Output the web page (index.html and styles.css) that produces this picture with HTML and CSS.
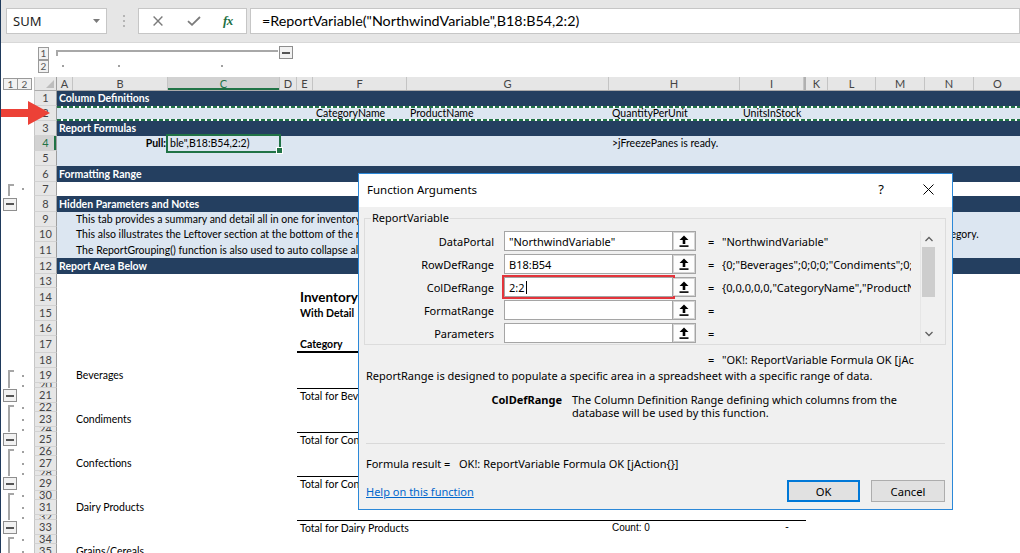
FILE: index.html
```html
<!DOCTYPE html>
<html lang="en">
<head>
<meta charset="utf-8">
<title>Function Arguments</title>
<link rel="stylesheet" href="styles.css">
</head>
<body>
<div class="app">
  <header class="fbar">
    <div class="namebox"><span>SUM</span><svg width="7" height="4" viewBox="0 0 7 4"><path d="M0 0H7L3.5 4Z" fill="#7a7a7a"/></svg></div>
    <div class="grip"><i></i><i></i><i></i></div>
    <div class="fxbox">
      <svg class="ic-x" width="10" height="10" viewBox="0 0 10 10"><path d="M0.6 0.6L9.4 9.4M9.4 0.6L0.6 9.4" stroke="#7b7b7b" stroke-width="1.4" fill="none"/></svg>
      <svg class="ic-ok" width="14" height="10" viewBox="0 0 14 10"><path d="M1 5.2L5 8.8L13 1" stroke="#7b7b7b" stroke-width="1.8" fill="none"/></svg>
      <span class="fx">fx</span>
    </div>
    <div class="formula">=ReportVariable("NorthwindVariable",B18:B54,2:2)</div>
  </header>

  <div class="olstrip">
    <div class="lvls"><b>1</b><b>2</b></div>
    <div class="colgrp">
      <i class="cg-line"></i>
      <i class="mnb cg-minus"></i>
      <i class="dot cg-a"></i><i class="dot cg-b"></i><i class="dot cg-c"></i>
    </div>
  </div>

  <div class="hdr">
    <div class="ol hlv"><b>1</b><b>2</b></div>
    <div class="corner"><i class="tri"></i></div>
    <div class="cols">
      <span>A</span><span>B</span><span class="on">C</span><span>D</span><span>E</span><span>F</span><span>G</span><span>H</span><span>I</span><span class="hid"></span><span>K</span><span>L</span><span>M</span><span>N</span><span>O</span>
    </div>
  </div>

  <div class="r h15"><div class="ol"></div><div class="rh">1</div><div class="cells navy"><span class="ca">Column Definitions</span></div></div>
  <div class="r h15"><div class="ol"></div><div class="rh">2</div><div class="cells lite ants"><span class="cf">CategoryName</span><span class="cg">ProductName</span><span class="chh">QuantityPerUnit</span><span class="ci">UnitsInStock</span></div></div>
  <div class="r h15"><div class="ol"></div><div class="rh">3</div><div class="cells navy"><span class="ca">Report Formulas</span></div></div>
  <div class="r h15"><div class="ol"></div><div class="rh on">4</div><div class="cells lite"><span class="cb pull">Pull:</span><span class="cc sel">ble",B18:B54,2:2)</span><span class="chh">&gt;jFreezePanes is ready.</span></div></div>
  <div class="r h15"><div class="ol"></div><div class="rh">5</div><div class="cells lite"></div></div>
  <div class="r h16"><div class="ol"></div><div class="rh">6</div><div class="cells navy"><span class="ca">Formatting Range</span></div></div>
  <div class="r h14"><div class="ol"><i class="bk t"></i><i class="dot"></i></div><div class="rh">7</div><div class="cells"></div></div>
  <div class="r h16"><div class="ol"><i class="mnb"></i></div><div class="rh">8</div><div class="cells navy"><span class="ca">Hidden Parameters and Notes</span></div></div>
  <div class="r h15"><div class="ol"></div><div class="rh">9</div><div class="cells lite"><span class="cb">This tab provides a summary and detail all in one for inventory.</span></div></div>
  <div class="r h15"><div class="ol"></div><div class="rh">10</div><div class="cells lite"><span class="cb">This also illustrates the Leftover section at the bottom of the report, which picks up any product returned by the database that do not fall into any of the rows defined for a specific product category.</span></div></div>
  <div class="r h16"><div class="ol"></div><div class="rh">11</div><div class="cells lite"><span class="cb">The ReportGrouping() function is also used to auto collapse all.</span></div></div>
  <div class="r h16"><div class="ol"></div><div class="rh">12</div><div class="cells navy"><span class="ca">Report Area Below</span></div></div>
  <div class="r h14"><div class="ol"></div><div class="rh">13</div><div class="cells"></div></div>
  <div class="r h18"><div class="ol"></div><div class="rh">14</div><div class="cells"><span class="ce title">Inventory</span></div></div>
  <div class="r h15"><div class="ol"></div><div class="rh">15</div><div class="cells"><span class="ce bold">With Detail</span></div></div>
  <div class="r h15"><div class="ol"></div><div class="rh">16</div><div class="cells"></div></div>
  <div class="r h17"><div class="ol"></div><div class="rh">17</div><div class="cells"><i class="ej uline"></i><span class="ce cat">Category</span></div></div>
  <div class="r h15"><div class="ol"></div><div class="rh">18</div><div class="cells"></div></div>
  <div class="r h15"><div class="ol"><i class="bk t"></i><i class="dot"></i></div><div class="rh">19</div><div class="cells"><span class="cb">Beverages</span></div></div>
  <div class="r h5"><div class="ol"><i class="bk"></i><i class="dot"></i></div><div class="rh">20</div><div class="cells"></div></div>
  <div class="r h15"><div class="ol"><i class="mnb"></i></div><div class="rh">21</div><div class="cells"><i class="ej tline"></i><span class="ce tot">Total for Bev</span></div></div>
  <div class="r h9"><div class="ol"><i class="bk t"></i><i class="dot"></i></div><div class="rh">22</div><div class="cells"></div></div>
  <div class="r h15"><div class="ol"><i class="bk"></i><i class="dot"></i></div><div class="rh">23</div><div class="cells"><span class="cb">Condiments</span></div></div>
  <div class="r h5"><div class="ol"><i class="bk"></i><i class="dot"></i></div><div class="rh">24</div><div class="cells"></div></div>
  <div class="r h15"><div class="ol"><i class="mnb"></i></div><div class="rh">25</div><div class="cells"><i class="ej tline"></i><span class="ce tot">Total for Con</span></div></div>
  <div class="r h9"><div class="ol"><i class="bk t"></i><i class="dot"></i></div><div class="rh">26</div><div class="cells"></div></div>
  <div class="r h15"><div class="ol"><i class="bk"></i><i class="dot"></i></div><div class="rh">27</div><div class="cells"><span class="cb">Confections</span></div></div>
  <div class="r h5"><div class="ol"><i class="bk"></i><i class="dot"></i></div><div class="rh">28</div><div class="cells"></div></div>
  <div class="r h15"><div class="ol"><i class="mnb"></i></div><div class="rh">29</div><div class="cells"><i class="ej tline"></i><span class="ce tot">Total for Con</span></div></div>
  <div class="r h9"><div class="ol"><i class="bk t"></i><i class="dot"></i></div><div class="rh">30</div><div class="cells"></div></div>
  <div class="r h15"><div class="ol"><i class="bk"></i><i class="dot"></i></div><div class="rh">31</div><div class="cells"><span class="cb">Dairy Products</span></div></div>
  <div class="r h5"><div class="ol"><i class="bk"></i><i class="dot"></i></div><div class="rh">32</div><div class="cells"></div></div>
  <div class="r h15"><div class="ol"><i class="mnb"></i></div><div class="rh">33</div><div class="cells"><i class="ej tline"></i><span class="ce tot">Total for Dairy Products</span><span class="chh cnt">Count: 0</span><span class="ci dash">-</span></div></div>
  <div class="r h9"><div class="ol"><i class="bk t"></i><i class="dot"></i></div><div class="rh">34</div><div class="cells"></div></div>
  <div class="r h15"><div class="ol"><i class="bk"></i><i class="dot"></i></div><div class="rh">35</div><div class="cells"><span class="cb">Grains/Cereals</span></div></div>

  <svg class="arrow" width="52" height="26" viewBox="0 0 52 26"><path d="M0 9H28V1L50 13L28 25V17H0Z" fill="#ec4137"/></svg>

  <section class="dlg">
    <div class="dlg-title">
      <span class="dt">Function Arguments</span>
      <span class="q">?</span>
      <svg class="close" width="11" height="11" viewBox="0 0 11 11"><path d="M0.5 0.5L10.5 10.5M10.5 0.5L0.5 10.5" stroke="#000" stroke-width="1" fill="none"/></svg>
    </div>
    <div class="dlg-body">
      <fieldset class="gb">
        <legend>ReportVariable</legend>
        <div class="gb-in">
          <div class="args">
            <label>DataPortal</label>
            <div class="inp"><span class="fld">"NorthwindVariable"</span><span class="rb"><svg width="10" height="12" viewBox="0 0 10 12"><path d="M5 0.5L9.5 5H6.3V9H3.7V5H0.5Z" fill="#000"/><rect x="0.5" y="10.3" width="9" height="1.6" fill="#000"/></svg></span></div>
            <span class="eq">=</span><span class="val">"NorthwindVariable"</span>

            <label>RowDefRange</label>
            <div class="inp"><span class="fld">B18:B54</span><span class="rb"><svg width="10" height="12" viewBox="0 0 10 12"><path d="M5 0.5L9.5 5H6.3V9H3.7V5H0.5Z" fill="#000"/><rect x="0.5" y="10.3" width="9" height="1.6" fill="#000"/></svg></span></div>
            <span class="eq">=</span><span class="val">{0;"Beverages";0;0;0;"Condiments";0;0;0;"Confections"}</span>

            <label>ColDefRange</label>
            <div class="inp"><span class="fld hl">2:2<i class="caret"></i></span><span class="rb"><svg width="10" height="12" viewBox="0 0 10 12"><path d="M5 0.5L9.5 5H6.3V9H3.7V5H0.5Z" fill="#000"/><rect x="0.5" y="10.3" width="9" height="1.6" fill="#000"/></svg></span></div>
            <span class="eq">=</span><span class="val">{0,0,0,0,0,"CategoryName","ProductName","QuantityPerUnit"}</span>

            <label>FormatRange</label>
            <div class="inp"><span class="fld"></span><span class="rb"><svg width="10" height="12" viewBox="0 0 10 12"><path d="M5 0.5L9.5 5H6.3V9H3.7V5H0.5Z" fill="#000"/><rect x="0.5" y="10.3" width="9" height="1.6" fill="#000"/></svg></span></div>
            <span class="eq">=</span><span class="val"></span>

            <label>Parameters</label>
            <div class="inp"><span class="fld"></span><span class="rb"><svg width="10" height="12" viewBox="0 0 10 12"><path d="M5 0.5L9.5 5H6.3V9H3.7V5H0.5Z" fill="#000"/><rect x="0.5" y="10.3" width="9" height="1.6" fill="#000"/></svg></span></div>
            <span class="eq">=</span><span class="val"></span>
          </div>
          <div class="vsb">
            <svg class="chev" width="16" height="16" viewBox="0 0 16 16"><path d="M4.5 10L8 6.5L11.5 10" stroke="#606060" stroke-width="1.3" fill="none"/></svg>
            <i class="thumb"></i>
            <i class="track"></i>
            <svg class="chev" width="16" height="17" viewBox="0 0 16 17"><path d="M4.5 6L8 9.5L11.5 6" stroke="#606060" stroke-width="1.3" fill="none"/></svg>
          </div>
        </div>
      </fieldset>
      <div class="res"><span class="eq">=</span><span>"OK!: ReportVariable Formula OK [jAc</span></div>
      <p class="desc">ReportRange is designed to populate a specific area in a spreadsheet with a specific range of data.</p>
      <div class="adesc"><b>ColDefRange</b><span>The Column Definition Range defining which columns from the database will be used by this function.</span></div>
      <hr class="sep">
      <div class="fres"><span>Formula result =</span><span>OK!: ReportVariable Formula OK [jAction{}]</span></div>
      <div class="foot">
        <a class="help">Help on this function</a>
        <button class="btn ok">OK</button>
        <button class="btn">Cancel</button>
      </div>
    </div>
  </section>
</div>
</body>
</html>
```

FILE: styles.css
```css
*{box-sizing:border-box;margin:0;padding:0}
html,body{width:1020px;height:553px;overflow:hidden;background:#fff}
body{font-family:Lato,"Liberation Sans",sans-serif;color:#000;
  --cols:16px 95px 112px 17px 16px 94px 202px 131px 64px 2px 22px 48px 49px 49px 48px;
  --navy:#243f60;--lite:#dce6f1;--green:#217346}
.app{position:relative;width:1020px;height:553px;overflow:hidden;border-left:1px solid #1f3a5c}

/* formula bar */
.fbar{height:43px;background:#e6e6e6;display:flex;align-items:flex-start;padding:8px 0 0 5px;border-bottom:1px solid #d8d8d8}
.namebox{width:101px;height:26px;background:#fff;border:1px solid #c6c6c6;display:flex;align-items:center;justify-content:space-between;padding:0 6px 0 6px;font:13px "Noto Sans",sans-serif;color:#222}
.grip{width:2px;margin:7px 0 0 16px;display:flex;flex-direction:column;gap:3px}
.grip i{width:2px;height:2px;background:#b5b5b5}
.fxbox{margin-left:13px;width:109px;height:26px;background:#fff;border:1px solid #c6c6c6;display:flex;align-items:center}
.ic-x{margin-left:14px}
.ic-ok{margin-left:24px}
.fx{margin-left:22px;font:italic 13px "Liberation Serif",serif;color:#1e7145;font-weight:700;letter-spacing:-0.5px}
.formula{margin-left:3px;flex:1;height:26px;background:#fff;border:1px solid #c6c6c6;padding-left:11px;font:14.3px Lato,sans-serif;line-height:24px;white-space:nowrap}

/* outline strip */
.olstrip{height:34px;display:flex}
.lvls{margin:4px 0 0 37px;display:flex;flex-direction:column;width:13px}
.lvls b,.hlv b{display:block;border:1px solid #9a9a9a;background:#f2f2f2;font:10px Lato,sans-serif;color:#555;text-align:center}
.lvls b{height:13px;line-height:11px}
.colgrp{margin:2px 0 0 6px;display:grid;grid-template-columns:var(--cols);grid-template-rows:16px 6px}
.cg-line{grid-column:1/4;grid-row:1;margin:5px 0 0 1px;height:6px;border-top:2px solid #a8a8a8;border-left:2px solid #a8a8a8}
.cg-minus{grid-column:4;grid-row:1;margin:1px 0 0 1px!important}
.cg-a,.cg-b,.cg-c{grid-row:2;justify-self:center;align-self:start;margin:3px 0 0 0!important}
.cg-a{grid-column:1}.cg-b{grid-column:2}.cg-c{grid-column:3}

/* header row */
.hdr{display:flex;height:14px}
.ol{width:33px;flex:none;display:flex}
.hlv{padding:1px 0 0 2px}
.hlv b{width:15px;height:12px;line-height:10px}
.hlv b+b{margin-left:-1px}
.corner{width:23px;flex:none;background:#e6e6e6;border-left:1px solid #c6c6c6;border-right:1px solid #9e9e9e;border-bottom:1px solid #ababab;display:flex;align-items:flex-end;justify-content:flex-end;padding:0 2px 2px 0}
.tri{width:0;height:0;border-left:8px solid transparent;border-bottom:8px solid #bdbdbd}
.cols{width:965px;flex:none;display:grid;grid-template-columns:var(--cols);background:#e6e6e6;border-bottom:1px solid #ababab}
.cols span{border-right:1px solid #c4c4c4;text-align:center;font-size:11px;line-height:13px;color:#444;overflow:hidden}
.cols .on{background:#d2d2d2;color:var(--green);box-shadow:inset 0 -2px var(--green)}
.cols .hid{border-left:1px solid #b0b0b0;border-right:1px solid #b0b0b0}

/* rows */
.r{display:flex}
.h5{height:5px}.h9{height:9px}.h14{height:14px}.h15{height:15px}.h16{height:16px}.h17{height:17px}.h18{height:18px}
.rh{width:23px;flex:none;background:#e6e6e6;border-left:1px solid #c6c6c6;border-right:1px solid #9e9e9e;border-bottom:1px solid #d2d2d2;color:#444;font-size:11px;line-height:12px;display:flex;align-items:center;justify-content:center;overflow:hidden}
.rh.on{background:#d2d2d2;color:var(--green);box-shadow:inset -2px 0 var(--green)}
.cells{width:965px;flex:none;display:grid;grid-template-columns:var(--cols);grid-template-rows:100%;align-items:center}
.cells>*{grid-row:1;white-space:nowrap;padding-left:3px;font-size:10.5px;line-height:13px}
.navy{background:var(--navy);color:#fff}
.navy>*{font-weight:700;padding-left:2px}
.lite{background:var(--lite)}
.ants{background:
  repeating-linear-gradient(90deg,var(--green) 0 4px,#fff 4px 6px) left top/100% 2px no-repeat,
  repeating-linear-gradient(90deg,var(--green) 0 4px,#fff 4px 6px) left bottom/100% 2px no-repeat,
  var(--lite)}
.ca{grid-column:1}.cb{grid-column:2}.cc{grid-column:3}.ce{grid-column:5}.cf{grid-column:6}.cg{grid-column:7}.chh{grid-column:8}.ci{grid-column:9}
.ej{grid-column:5/11;align-self:stretch}
.pull{justify-self:end;padding:0 2px 0 0;font-weight:700}
.sel{align-self:stretch;position:relative;outline:2px solid var(--green);outline-offset:0;padding-left:2px;line-height:15px;margin:0 1px 0 0}
.sel::after{content:"";position:absolute;right:-4px;bottom:-3px;width:5px;height:5px;background:var(--green);border:1px solid #fff}
.title{font-size:13.5px;font-weight:700}
.bold{font-weight:700}
.uline{border-bottom:2px solid #000}
.cat{align-self:end;font-weight:700;padding-bottom:2px}
.tline{border-top:1px solid #000}
.tot{padding-top:1px}
.cnt{font:10px "Liberation Sans",sans-serif}
.dash{justify-self:end;padding-right:15px}

/* outline symbols */
.bk{width:6px;flex:none;margin-left:7px;border-left:2px solid #a6a6a6}
.bk.t{border-top:2px solid #a6a6a6;margin-top:2px}
.dot{width:2px;height:2px;flex:none;background:#a0a0a0;align-self:center;margin-left:8px}
.mnb{width:14px;height:13px;flex:none;margin:auto 0 auto 2px;border:1px solid #8e8e8e;background:#f2f2f2;display:flex;align-items:center;justify-content:center}
.mnb::before{content:"";width:8px;height:2px;background:#555}

/* red arrow */
.arrow{position:absolute;left:-1px;top:100px}

/* dialog */
.dlg{position:absolute;left:357px;top:173px;width:595px;height:337px;border:1px solid #2b88d8;background:#f0f0f0;font-family:"Noto Sans",sans-serif;font-size:11px;color:#000}
.dlg-title{height:33px;background:#fff;display:flex;align-items:center;padding:0 18px 3px 8px}
.dt{margin-right:auto;font-size:11.5px}
.q{font-size:13px;margin-right:39px}
.dlg-body{padding:0 7px}
.gb{border:1px solid #dcdcdc;margin:3px -1px 0 -2px;padding:5px 9px 1px 0;min-width:0}
.gb legend{margin-left:6px;padding:0 1px;line-height:16px}
.gb-in{display:flex}
.args{display:grid;grid-template-columns:139px 204px 14px 189px;grid-auto-rows:20px;row-gap:3px;align-items:center}
.args label{text-align:right;padding-right:10px}
.inp{width:192px;height:20px;display:flex;background:#fff;border:1px solid #a5a5a5}
.fld{flex:1;display:flex;align-items:center;padding-left:4px;white-space:nowrap;overflow:hidden}
.fld.hl{outline:2px solid #e3343b;outline-offset:1px;overflow:visible}
.caret{display:inline-block;width:1px;height:13px;background:#000;margin-left:1px}
.rb{width:23px;flex:none;border-left:1px solid #a5a5a5;display:flex;align-items:center;justify-content:center;background:#fdfdfd;box-shadow:inset 0 0 0 1px #d4d4d4}
.eq{white-space:nowrap}
.val{white-space:nowrap;overflow:hidden}
.vsb{width:16px;margin-left:9px;display:flex;flex-direction:column;border-left:1px solid #e6e6e6}
.chev{display:block;flex:none}
.thumb{height:50px;margin:0 1px;background:#cdcdcd}
.track{flex:1}
.res{margin-top:7px;padding-left:342px;line-height:15px;display:flex;white-space:nowrap}
.res .eq{width:14px}
.desc{line-height:15px;white-space:nowrap;margin-top:1px}
.adesc{margin-top:10px;display:grid;grid-template-columns:196px 335px;column-gap:10px;line-height:13px}
.adesc b{text-align:right}
.sep{margin-top:24px;border:0;border-top:1px solid #d9d9d9}
.fres{margin-top:12px;line-height:15px;display:grid;grid-template-columns:93px auto;white-space:nowrap}
.foot{margin-top:9px;display:flex;align-items:center}
.help{margin-right:auto;color:#0066cc;text-decoration:underline}
.btn{height:22px;width:73px;background:#e1e1e1;border:1px solid #adadad;font:inherit;font-size:11.2px;color:#000}
.btn.ok{border:2px solid #0078d7;margin-right:11px}
.btn+.btn{width:74px}
```
